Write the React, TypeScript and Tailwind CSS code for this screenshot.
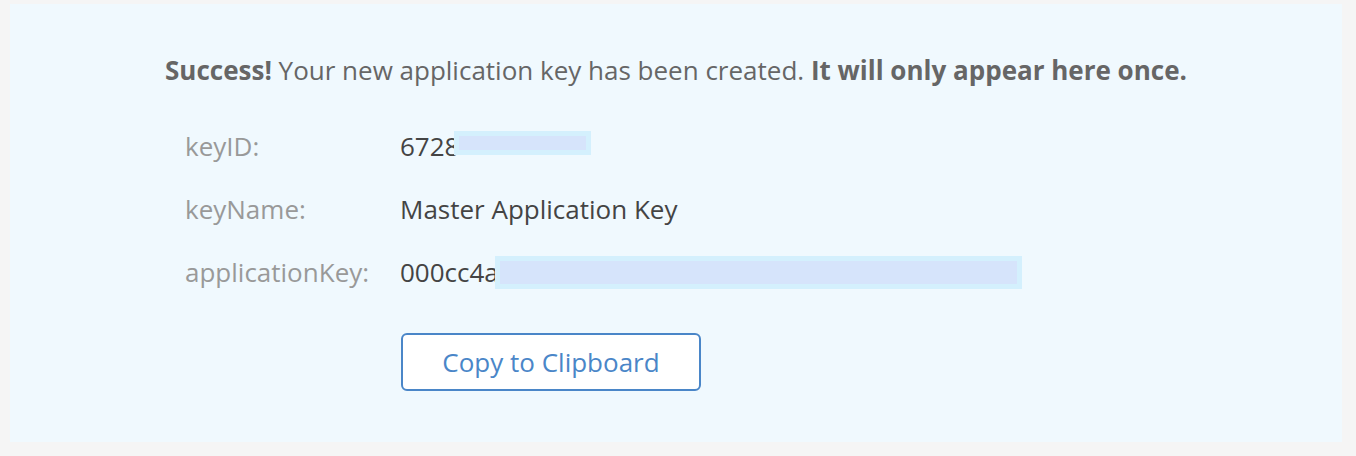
export default function App() {
  const font = { fontFamily: '"Open Sans", "Noto Sans", sans-serif' };
  return (
    <div className="w-[1356px] h-[456px] bg-[#f5f5f5] pt-[4px] pl-[10px]" style={font}>
      <div className="w-[1332px] h-[438px] bg-[#f0f9fe] pt-[48px]">
        <p className="text-center text-[26px] leading-[36px] text-[#666666]">
          <span className="font-bold">Success!</span> Your new application key has been created.{" "}
          <span className="font-bold">It will only appear here once.</span>
        </p>

        <div className="mt-[40px] pl-[175px] flex flex-col gap-[27px] text-[26px] leading-[36px]">
          <div className="flex items-center h-[36px]">
            <div className="w-[215px] text-[#999999]">keyID:</div>
            <div className="flex items-center text-[#444444]">
              <span>6728</span>
              <span className="w-[137px] h-[24px] -ml-[5px] border-[5px] border-[#d4f0fd] bg-[#d6e4fb] -mt-[6px]" />
            </div>
          </div>
          <div className="flex items-center h-[36px]">
            <div className="w-[215px] text-[#999999]">keyName:</div>
            <div className="text-[#444444]">Master Application Key</div>
          </div>
          <div className="flex items-center h-[36px]">
            <div className="w-[215px] text-[#999999]">applicationKey:</div>
            <div className="flex items-center text-[#444444]">
              <span>000cc4a</span>
              <span className="w-[527px] h-[33px] -ml-[4px] border-[5px] border-[#d4f0fd] bg-[#d6e4fb]" />
            </div>
          </div>
        </div>

        <div className="mt-[43px] pl-[391px]">
          <button className="w-[300px] h-[58px] rounded-[6px] border-2 border-[#4a86c8] bg-white text-[26px] text-[#4a86c8]">
            Copy to Clipboard
          </button>
        </div>
      </div>
    </div>
  );
}
